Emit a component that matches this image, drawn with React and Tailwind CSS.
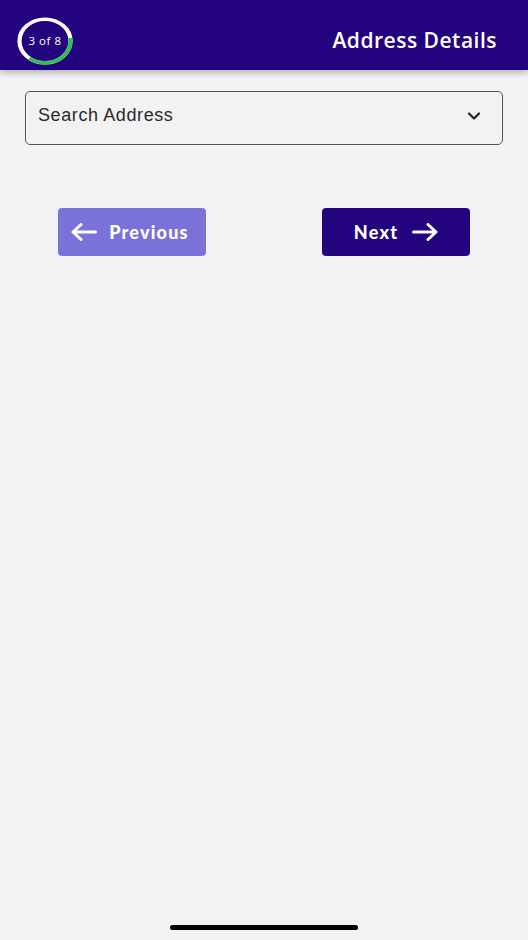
import { ChevronDown } from "lucide-react";

const StepRing = ({ step, total }) => {
  const r = 25.5;
  const c = 2 * Math.PI * r;
  const done = (step / total) * c;

  return (
    <div className="relative w-[58px] h-[50px] flex items-center justify-center">
      <svg width="58" height="50" viewBox="0 0 58 50" className="absolute inset-0">
        <g transform="translate(29 25) scale(1 0.855)">
          <circle r={r} fill="none" stroke="#ffffff" strokeWidth="4.2" />
          <circle
            r={r}
            fill="none"
            stroke="#2fbf55"
            strokeWidth="4.2"
            strokeDasharray={`${done} ${c}`}
            transform="rotate(-8)"
          />
        </g>
      </svg>
      <span className="relative text-[11.5px] tracking-[0.5px] text-white font-['Open_Sans',sans-serif]">
        {step} of {total}
      </span>
    </div>
  );
};

const Arrow = ({ dir }) => (
  <svg width="26" height="18" viewBox="0 0 26 18" fill="none" stroke="currentColor" strokeWidth="3" strokeLinecap="round" strokeLinejoin="round">
    {dir === "left" ? (
      <path d="M24.5 9H2 M10 1.5 L2 9 L10 16.5" />
    ) : (
      <path d="M1.5 9H24 M16 1.5 L24 9 L16 16.5" />
    )}
  </svg>
);

const App = () => {
  return (
    <div className="min-h-screen w-full bg-[#f2f2f2] flex flex-col font-['Open_Sans',sans-serif]">
      <header className="h-[70px] bg-[#24037f] flex items-center justify-between pt-[11px] pl-[16px] pr-[31px] shadow-[0_3px_6px_rgba(0,0,0,0.25)]">
        <StepRing step={3} total={8} />
        <h1 className="text-white text-[21px] tracking-[0.5px] font-semibold">Address Details</h1>
      </header>

      <div className="px-[25px] pt-[21px]">
        <button className="w-full h-[54px] border border-[#555] rounded-[5px] flex items-center justify-between pl-[12px] pr-[18px] pb-[5px]">
          <span className="text-[18px] tracking-[0.6px] text-[#2a2a2a] font-['Liberation_Sans',sans-serif]">Search Address</span>
          <ChevronDown size={20} strokeWidth={2.6} className="text-[#222]" />
        </button>
      </div>

      <div className="grid grid-cols-2 mt-[63px]">
        <div className="flex justify-center">
          <button className="w-[148px] h-[48px] rounded-[4px] bg-[#7b72d9] text-white flex items-center justify-center gap-[12px] pr-[4px]">
            <Arrow dir="left" />
            <span className="text-[18px] font-black tracking-[1.2px] font-['Lato',sans-serif]">Previous</span>
          </button>
        </div>
        <div className="flex justify-center">
          <button className="w-[148px] h-[48px] rounded-[4px] bg-[#24037f] text-white flex items-center justify-center gap-[14px]">
            <span className="text-[18px] font-black tracking-[1.2px] font-['Lato',sans-serif]">Next</span>
            <Arrow dir="right" />
          </button>
        </div>
      </div>

      <div className="flex-1" />
      <div className="flex justify-center pb-[10px]">
        <div className="w-[188px] h-[5px] rounded-full bg-black" />
      </div>
    </div>
  );
};

export default App;
